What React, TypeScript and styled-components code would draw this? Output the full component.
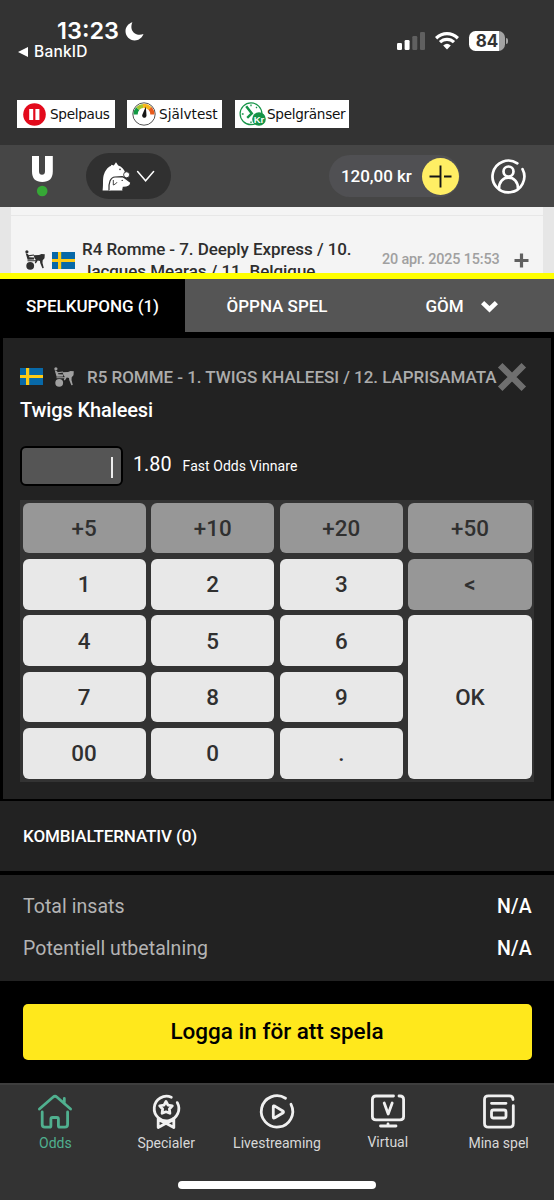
import React from "react";
import styled, { createGlobalStyle } from "styled-components";

const Global = createGlobalStyle`
  *, *::before, *::after { box-sizing: border-box; }
  body { margin: 0; background: #333; font-family: Roboto, "Liberation Sans", sans-serif; }
  button { font: inherit; border: 0; margin: 0; padding: 0; color: inherit; background: none; }
  svg { display: block; flex: none; overflow: visible; }
`;

const Screen = styled.div`
  width: 554px;
  height: 1200px;
  display: flex;
  flex-direction: column;
  overflow: hidden;
  background: #333;
`;

const Label = styled.span<{ $size: number; $weight?: number; $color?: string; $track?: number }>`
  font-size: ${(p) => p.$size}px;
  font-weight: ${(p) => p.$weight ?? 400};
  color: ${(p) => p.$color ?? "#fff"};
  letter-spacing: ${(p) => p.$track ?? 0}px;
  line-height: 1.2;
  white-space: nowrap;
`;

/* Status bar */
const StatusBar = styled.div`
  height: 100px;
  flex: none;
  display: flex;
  justify-content: space-between;
  padding: 18px 46px 0 18px;
  font-family: Inter, sans-serif;
`;
const ClockColumn = styled.div`
  display: flex;
  flex-direction: column;
`;
const ClockRow = styled.div`
  height: 26px;
  display: flex;
  align-items: center;
  gap: 6px;
  padding-left: 39px;
`;
const BackRow = styled.div`
  height: 16px;
  display: flex;
  align-items: center;
  gap: 6px;
`;
const Signals = styled.div`
  height: 20px;
  margin-top: 13px;
  display: flex;
  align-items: center;
`;
const Battery = styled.div`
  width: 36px;
  height: 20px;
  margin-left: 10px;
  border-radius: 6.5px;
  background: linear-gradient(90deg, #fff 30px, #a3a3a3 30px);
  display: flex;
  align-items: center;
  justify-content: center;
`;
const BatteryTip = styled.div`
  width: 2px;
  height: 6px;
  margin-left: 1px;
  border-radius: 0 2px 2px 0;
  background: #a3a3a3;
`;

/* Responsible gaming badges */
const Badges = styled.div`
  height: 45px;
  flex: none;
  display: flex;
  align-items: flex-start;
  padding-left: 17px;
`;
const Badge = styled.div<{ $width: number; $pad: number; $gap: number; $after: number }>`
  width: ${(p) => p.$width}px;
  height: 28px;
  margin-right: ${(p) => p.$after}px;
  padding-left: ${(p) => p.$pad}px;
  display: flex;
  align-items: center;
  gap: ${(p) => p.$gap}px;
  background: #fff;
  font-family: "DejaVu Sans", sans-serif;
`;

/* App header */
const Header = styled.header`
  height: 62px;
  flex: none;
  display: flex;
  align-items: center;
  padding: 0 28px 0 31px;
  background: #464646;
`;
const SportPicker = styled.button`
  width: 85px;
  height: 46px;
  margin-left: 33px;
  padding: 0 16px;
  display: flex;
  align-items: center;
  gap: 6px;
  border-radius: 23px;
  background: #303030;
`;
const Balance = styled.div`
  width: 131px;
  height: 42px;
  margin-left: auto;
  padding: 0 1px 0 12px;
  display: flex;
  align-items: center;
  justify-content: space-between;
  border-radius: 21px;
  background: #505053;
`;
const AddFunds = styled.button`
  width: 37px;
  height: 37px;
  display: flex;
  align-items: center;
  justify-content: center;
  border-radius: 50%;
  background: #ffee64;
`;
const Profile = styled.div`
  margin-left: 31px;
`;

/* Results list, cut off by the coupon */
const Results = styled.div`
  height: 66px;
  flex: none;
  padding: 0 11px;
  background: #e6e6e6;
  overflow: hidden;
`;
const ResultsInner = styled.div`
  height: 66px;
  padding-top: 8px;
  background: #f4f4f4;
`;
const ResultRow = styled.div`
  height: 58px;
  display: flex;
  align-items: flex-start;
  padding-left: 14px;
  border-top: 1px solid #e7e7e7;
`;
const RowPart = styled.div<{ $top: number; $left: number }>`
  margin-top: ${(p) => p.$top}px;
  margin-left: ${(p) => p.$left}px;
`;
const ResultTitle = styled.div`
  width: 300px;
  height: 60px;
  margin: 22px 0 0 7px;
  font-size: 17px;
  font-weight: 500;
  letter-spacing: -0.06px;
  line-height: 22px;
  color: #2e2e2e;
  white-space: nowrap;
`;
const ResultDate = styled.div`
  width: 117px;
  margin-top: 33px;
`;

/* Coupon */
const Coupon = styled.section`
  height: 810px;
  flex: none;
  border-top: 6px solid #ffff00;
  background: #000;
  display: flex;
  flex-direction: column;
`;
const Tabs = styled.div`
  height: 53px;
  flex: none;
  display: grid;
  grid-template-columns: 185px 184px 185px;
`;
const Tab = styled.button<{ $active?: boolean }>`
  display: flex;
  align-items: center;
  justify-content: center;
  gap: 17px;
  padding-top: 2px;
  background: ${(p) => (p.$active ? "#000" : "#555")};
`;
const Bet = styled.div`
  height: 461px;
  flex: none;
  margin: 6px 3px 0;
  padding: 22px 17px 0;
  background: #222;
`;
const BetHead = styled.div`
  height: 33px;
  display: flex;
  align-items: center;
`;
const BetSelection = styled.div`
  height: 34px;
  display: flex;
  align-items: center;
`;
const StakeRow = styled.div`
  height: 42px;
  margin-top: 18px;
  padding-bottom: 2px;
  display: flex;
  align-items: center;
`;
const StakeField = styled.div`
  width: 103px;
  height: 40px;
  margin: 2px 10px 0 0;
  padding-right: 8px;
  display: flex;
  align-items: center;
  justify-content: flex-end;
  border: 2px solid #000;
  border-radius: 6px;
  background: #555;
`;
const Caret = styled.div`
  width: 2px;
  height: 21px;
  margin-top: 2px;
  background: #eee;
`;
const Keypad = styled.div`
  width: 514px;
  height: 282px;
  margin-top: 13px;
  padding: 2.7px 2.5px 3.3px;
  display: grid;
  grid-template-columns: repeat(4, 1fr);
  grid-template-rows: repeat(5, 1fr);
  gap: 5.5px;
  background: #333;
`;
const Key = styled.button<{ $dim?: boolean; $tall?: boolean }>`
  grid-row: ${(p) => (p.$tall ? "span 3" : "auto")};
  border-radius: 6px;
  background: ${(p) => (p.$dim ? "#979797" : "#e8e8e8")};
  color: #303030;
  font-size: 22.4px;
  font-weight: 500;
`;
const Combi = styled.div`
  height: 70px;
  flex: none;
  margin-top: 2px;
  padding-left: 23px;
  display: flex;
  align-items: center;
  background: #222;
`;
const Totals = styled.div`
  height: 106px;
  flex: none;
  margin-top: 4px;
  padding: 11px 22px 0 23px;
  background: #222;
`;
const TotalRow = styled.div`
  height: 42px;
  display: flex;
  align-items: center;
  justify-content: space-between;
`;
const LoginButton = styled.button`
  height: 56px;
  flex: none;
  margin: 23px 22.5px 0;
  padding-bottom: 2px;
  border-radius: 5px;
  background: #ffe81c;
  font-size: 22.5px;
  font-weight: 500;
`;

/* Bottom navigation */
const BottomNav = styled.nav`
  height: 98px;
  flex: none;
  display: grid;
  grid-template-columns: repeat(5, 1fr);
  border-top: 2px solid #3e3e3e;
`;
const NavItem = styled.div<{ $lift?: number }>`
  display: flex;
  flex-direction: column;
  align-items: center;
  gap: ${(p) => 6 - (p.$lift ?? 0)}px;
  padding-top: 9px;
`;
const HomeIndicator = styled.div`
  width: 198px;
  height: 8px;
  flex: none;
  margin-left: 178px;
  border-radius: 4px;
  background: #fff;
`;

const Flag = () => (
  <svg width="23" height="17" viewBox="0 0 23 17">
    <path fill="#0869a8" d="M0 0h23v17H0z" />
    <path fill="#fecb16" d="M6 0h3.200v17H6zM0 6.900h23v3H0z" />
  </svg>
);

const Sulky = ({ color }: { color: string }) => (
  <svg width="20" height="20" viewBox="0 0 20 20" fill="none" stroke={color}>
    <circle cx="1.900" cy="1.800" r="1.600" fill={color} stroke="none" />
    <path d="M.7 3.200L3.200 4.200 4.300 7.200 9.300 7.600 9 9.600 2.600 9.700z" fill={color} stroke="none" />
    <path d="M3 5.900L9 5M2.500 10.800H11" strokeWidth="1.100" />
    <path d="M8.500 5.200L14 5.100 16.500 4 19.800 4.200 19.500 8.200 17.700 10.300 17.500 13 18.800 18 17.400 18.200 15.200 13 15 10.900 12.800 10.600 10.800 13.500 9.800 12.800 10.800 10 9.500 8z" fill={color} stroke="none" />
    <circle cx="5.200" cy="15.800" r="3.900" fill={color} stroke="none" />
  </svg>
);

const Moon = () => (
  <svg width="19" height="19" viewBox="0 0 19 19">
    <path fill="#fff" d="M7.400.3C5.800 3.900 6 7.800 8.600 10.400c2.700 2.600 6.600 3 9.900 1.600-1.300 3.800-4.800 6.400-8.800 6.400C4.600 18.400.5 14.300.5 9.300.5 5.200 3.200 1.600 7.400.3z" />
  </svg>
);

const CellBars = () => (
  <svg width="28" height="18" viewBox="0 0 28 18">
    <rect x="0" y="11" width="5" height="7" rx="1.300" fill="#fff" />
    <rect x="7.600" y="8" width="5" height="10" rx="1.300" fill="#fff" />
    <rect x="15.300" y="4" width="5" height="14" rx="1.300" fill="#606060" />
    <rect x="23" y="0" width="5" height="18" rx="1.300" fill="#606060" />
  </svg>
);

const Wifi = () => (
  <svg width="24" height="18" viewBox="0 0 24 18" fill="none" stroke="#fff" strokeWidth="3.200">
    <path d="M1.100 6.200Q6.100 1.600 12 1.600T22.900 6.200" />
    <path d="M5 10.200Q8 7.300 12 7.300T19 10.200" />
    <path d="M8.200 13.400Q12 10.300 15.800 13.400L12 17.400z" fill="#fff" stroke="none" />
  </svg>
);

const PauseIcon = () => (
  <svg width="23" height="23" viewBox="0 0 23 23">
    <circle cx="11.500" cy="11.500" r="11.300" fill="#e30a1c" />
    <path fill="#fff" d="M6.200 6h4v11h-4zM12.400 6h4v11h-4z" />
  </svg>
);

const GaugeIcon = () => (
  <svg width="24" height="24" viewBox="0 0 24 24" fill="none">
    <circle cx="12" cy="12" r="11.200" fill="#fff" stroke="#555" strokeWidth="1" />
    <path d="M3.600 12.500A8.500 8.500 0 0 1 5.700 6.600" stroke="#139a45" strokeWidth="4.200" />
    <path d="M5.700 6.600A8.500 8.500 0 0 1 11 4" stroke="#a4c62c" strokeWidth="4.200" />
    <path d="M11 4A8.500 8.500 0 0 1 18 6.400" stroke="#f7b51b" strokeWidth="4.200" />
    <path d="M18 6.400A8.500 8.500 0 0 1 20.400 12.500" stroke="#e85a1c" strokeWidth="4.200" />
    <path d="M13.800 4.500l.7 8.800a2.200 2.200 0 1 1-4-1z" fill="#161616" />
  </svg>
);

const LimitIcon = () => (
  <svg width="27" height="24" viewBox="0 0 27 24" fill="none" stroke="#159447">
    <circle cx="12" cy="11.800" r="10.900" strokeWidth="1.200" fill="#fff" />
    <path d="M7.200 4.200l5.600 7.200-4.600 4.400" strokeWidth="2.400" />
    <path d="M12 2.500v1.800M12 19.500v1.800M2.800 12h1.800M19.300 12h1.800M18 5l-1 1" strokeWidth="1.300" />
    <circle cx="20" cy="17" r="6.800" fill="#159447" stroke="none" />
    <text x="20" y="20.600" textAnchor="middle" fill="#fff" stroke="none" fontSize="9.500" fontWeight="700" fontFamily="Liberation Sans, sans-serif">Kr</text>
  </svg>
);

const Logo = () => (
  <svg width="22" height="41" viewBox="0 0 22 41">
    <path fill="#fff" d="M1 0h7v15.200c0 2.400 1.100 3.500 3 3.500s3-1.100 3-3.500V0h7.800v15.500C21.800 22.500 18 26 11.300 26S1 22.500 1 15.500z" />
    <circle cx="11.200" cy="35" r="5.300" fill="#36a836" />
  </svg>
);

const Animals = () => (
  <svg width="29" height="29" viewBox="0 0 29 29">
    <path fill="#fff" d="M.6 28.500C1.600 22 .2 16 2.300 11.500 3.800 7.500 7 4.300 8.800 4L9.500 2.800 11.800 3.600 14 .2l2.200 3.400c3.300 1 6 3.700 7 7.200L22 15 8 28.500z" />
    <circle cx="24.600" cy="12.800" r="3" fill="#fff" stroke="#303030" strokeWidth=".9" />
    <path d="M7 28.500C6.400 21 8.300 15.300 13 15L20.300 14.600C23.500 15.600 25.300 18.600 28.900 20.500 28.400 23.800 25 25.400 21.300 25.300L20.700 28.500" fill="#fff" stroke="#303030" strokeWidth="1.200" />
    <path d="M11.300 18V23Q13.800 22.300 15 20.200" fill="none" stroke="#303030" strokeWidth=".9" />
    <circle cx="18" cy="7.400" r=".8" fill="#303030" />
    <circle cx="20.200" cy="18.400" r=".7" fill="#303030" />
  </svg>
);

const ThinChevron = () => (
  <svg width="17" height="11" viewBox="0 0 17 11">
    <path d="M.600.600l8 9.200 8-9.200" fill="none" stroke="#fff" strokeWidth="1.500" strokeLinecap="round" />
  </svg>
);

const ThinPlus = () => (
  <svg width="23" height="23" viewBox="0 0 23 23">
    <path d="M11.500.500v22M.500 11.500h11M15 11.500h7.500" stroke="#151515" strokeWidth="1.900" />
  </svg>
);

const ProfileIcon = () => (
  <svg width="35" height="35" viewBox="0 0 35 35" fill="none" stroke="#fff" strokeWidth="2.700" strokeLinecap="round">
    <path d="M26.300 4.300A15.900 15.900 0 1 0 31.500 10.100" />
    <circle cx="17.500" cy="12.500" r="5" />
    <path d="M8 29.700C8 22.800 12 18.700 17.500 18.700S27 22.800 27 29.700" />
  </svg>
);

const BoldPlus = () => (
  <svg width="15" height="15" viewBox="0 0 15 15">
    <path d="M7.500.500v14M.500 7.500h14" stroke="#606060" strokeWidth="3.200" />
  </svg>
);

const BoldChevron = () => (
  <svg width="17" height="11" viewBox="0 0 17 11">
    <path d="M1.600 1.600l6.900 6.600 6.900-6.600" fill="none" stroke="#fff" strokeWidth="4.600" />
  </svg>
);

const Cross = () => (
  <svg width="28" height="28" viewBox="0 0 28 28">
    <path d="M2.200 2.200l23.600 23.600M25.800 2.200L2.200 25.800" stroke="#6f6f6f" strokeWidth="6.400" />
  </svg>
);

const BackArrow = () => (
  <svg width="10" height="10" viewBox="0 0 10 10">
    <path d="M0 5L10 0v10z" fill="#fff" />
  </svg>
);

const NavSvg = ({ color = "#f0f0f0", children }: { color?: string; children: React.ReactNode }) => (
  <svg width="36" height="35" viewBox="0 0 36 35" fill="none" stroke={color} strokeWidth="2.800" strokeLinecap="round" strokeLinejoin="round">
    {children}
  </svg>
);

const HomeIcon = () => (
  <NavSvg color="#50b08f">
    <path d="M2.400 15L16.200 3q1.800-1.500 3.600 0L33.600 15M27.300 8.500V4.500" />
    <path d="M5.200 18v12.500q0 2.700 2.700 2.700h4.500q1.500 0 1.500-1.500V25q0-1.500 1.500-1.500h4.500q1.500 0 1.500 1.500v6.700q0 1.500 1.500 1.500h5q2.700 0 2.700-2.700V18" />
  </NavSvg>
);
const AwardIcon = () => (
  <NavSvg>
    <path d="M23.300 3.200A12.300 12.300 0 1 0 29.300 8.600" />
    <path d="M18 7.500l2 3.700 4.300.6-2.900 3.200.5 4.300-3.900-1.500-3.900 1.500.5-4.300-2.900-3.200 4.300-.6z" />
    <path d="M10.200 24.500v9l7.800-4.200 7.800 4.200v-9M12 26.500l6 2.800 6-2.800" />
  </NavSvg>
);
const PlayIcon = () => (
  <NavSvg>
    <path d="M26.500 4.200A15.700 15.700 0 1 0 32 10.300" />
    <path d="M14.300 12.700v10.200q0 1.700 1.500.9l8-4.800q1.400-1 0-2l-8-4.900q-1.500-.8-1.500.6z" />
  </NavSvg>
);
const VirtualIcon = () => (
  <NavSvg>
    <path d="M23.500 2H6Q2.400 2 2.400 5.400v17q0 3.400 3.600 3.400h24q3.600 0 3.600-3.400V5.400Q33.600 2 30 2h-1M18 29.800v2M10.500 32h15.500" />
    <path d="M14.200 9l4 11 4-11" />
  </NavSvg>
);
const SlipIcon = () => (
  <NavSvg>
    <path d="M32 5.500Q32 1.800 28.300 1.800H7.500Q3.500 1.800 3.500 5.800v23.400q0 4 4 4h20.800q4 0 4-4V11.700M10.500 9.300h14.500" />
    <rect x="10.500" y="16" width="14.500" height="8" rx="2" />
  </NavSvg>
);

const keys: { label: string; dim?: boolean; tall?: boolean }[] = [
  { label: "+5", dim: true }, { label: "+10", dim: true }, { label: "+20", dim: true }, { label: "+50", dim: true },
  { label: "1" }, { label: "2" }, { label: "3" }, { label: "<", dim: true },
  { label: "4" }, { label: "5" }, { label: "6" }, { label: "OK", tall: true },
  { label: "7" }, { label: "8" }, { label: "9" },
  { label: "00" }, { label: "0" }, { label: "." },
];

export default function App() {
  return (
    <Screen>
      <Global />
      <StatusBar>
        <ClockColumn>
          <ClockRow>
            <Label $size={23.5} $weight={600}>13:23</Label>
            <Moon />
          </ClockRow>
          <BackRow>
            <BackArrow />
            <Label $size={15.5} $weight={500} $track={0.2}>BankID</Label>
          </BackRow>
        </ClockColumn>
        <Signals>
          <CellBars />
          <RowPart $top={0} $left={10}><Wifi /></RowPart>
          <Battery>
            <Label $size={17} $weight={700} $color="#333">84</Label>
          </Battery>
          <BatteryTip />
        </Signals>
      </StatusBar>

      <Badges>
        <Badge $width={98} $pad={6} $gap={4} $after={12}>
          <PauseIcon />
          <Label $size={13.6} $color="#111" $track={-0.3}>Spelpaus</Label>
        </Badge>
        <Badge $width={95} $pad={5} $gap={3} $after={13}>
          <GaugeIcon />
          <Label $size={13.6} $color="#111">Självtest</Label>
        </Badge>
        <Badge $width={114} $pad={4} $gap={1} $after={0}>
          <LimitIcon />
          <Label $size={13.6} $color="#111" $track={-0.3}>Spelgränser</Label>
        </Badge>
      </Badges>

      <Header>
        <Logo />
        <SportPicker>
          <Animals />
          <ThinChevron />
        </SportPicker>
        <Balance>
          <Label $size={17} $weight={500} $track={-0.05}>120,00 kr</Label>
          <AddFunds><ThinPlus /></AddFunds>
        </Balance>
        <Profile><ProfileIcon /></Profile>
      </Header>

      <Results>
        <ResultsInner>
          <ResultRow>
            <RowPart $top={34} $left={0}><Sulky color="#303030" /></RowPart>
            <RowPart $top={36} $left={7}><Flag /></RowPart>
            <ResultTitle>
              R4 Romme - 7. Deeply Express / 10.
              <br />
              Jacques Mearas / 11. Belgique
            </ResultTitle>
            <ResultDate>
              <Label $size={14.4} $weight={500} $color="#a0a0a0" $track={-0.15}>20 apr. 2025 15:53</Label>
            </ResultDate>
            <RowPart $top={37} $left={15}><BoldPlus /></RowPart>
          </ResultRow>
        </ResultsInner>
      </Results>

      <Coupon>
        <Tabs>
          <Tab $active><Label $size={17} $weight={500} $track={-0.05}>SPELKUPONG (1)</Label></Tab>
          <Tab><Label $size={17} $weight={500}>ÖPPNA SPEL</Label></Tab>
          <Tab>
            <Label $size={17} $weight={500}>GÖM</Label>
            <BoldChevron />
          </Tab>
        </Tabs>

        <Bet>
          <BetHead>
            <Flag />
            <RowPart $top={0} $left={11}><Sulky color="#a0a0a0" /></RowPart>
            <RowPart $top={2} $left={13}>
              <Label $size={17} $weight={500} $color="#acacac" $track={-0.03}>R5 ROMME - 1. TWIGS KHALEESI / 12. LAPRISAMATA</Label>
            </RowPart>
            <RowPart $top={0} $left={2}><Cross /></RowPart>
          </BetHead>
          <BetSelection>
            <Label $size={20} $weight={500} $track={-0.12}>Twigs Khaleesi</Label>
          </BetSelection>
          <StakeRow>
            <StakeField><Caret /></StakeField>
            <Label $size={19.8}>1.80</Label>
            <RowPart $top={0} $left={11}><Label $size={14} $track={0.05}>Fast Odds Vinnare</Label></RowPart>
          </StakeRow>
          <Keypad>
            {keys.map((k) => (
              <Key key={k.label} $dim={k.dim} $tall={k.tall}>{k.label}</Key>
            ))}
          </Keypad>
        </Bet>

        <Combi><Label $size={17} $weight={500} $track={-0.1}>KOMBIALTERNATIV (0)</Label></Combi>

        <Totals>
          <TotalRow>
            <Label $size={19.5} $color="#b4b4b4" $track={0.05}>Total insats</Label>
            <Label $size={19.5} $weight={500} $track={0.25}>N/A</Label>
          </TotalRow>
          <TotalRow>
            <Label $size={19.5} $color="#b4b4b4" $track={0.05}>Potentiell utbetalning</Label>
            <Label $size={19.5} $weight={500} $track={0.25}>N/A</Label>
          </TotalRow>
        </Totals>

        <LoginButton>Logga in för att spela</LoginButton>
      </Coupon>

      <BottomNav>
        <NavItem><HomeIcon /><Label $size={14} $color="#50b08f">Odds</Label></NavItem>
        <NavItem><AwardIcon /><Label $size={14} $color="#d8d8d8">Specialer</Label></NavItem>
        <NavItem><PlayIcon /><Label $size={14} $color="#d8d8d8">Livestreaming</Label></NavItem>
        <NavItem $lift={1.5}><VirtualIcon /><Label $size={14} $color="#d8d8d8">Virtual</Label></NavItem>
        <NavItem><SlipIcon /><Label $size={14} $color="#d8d8d8">Mina spel</Label></NavItem>
      </BottomNav>
      <HomeIndicator />
    </Screen>
  );
}
